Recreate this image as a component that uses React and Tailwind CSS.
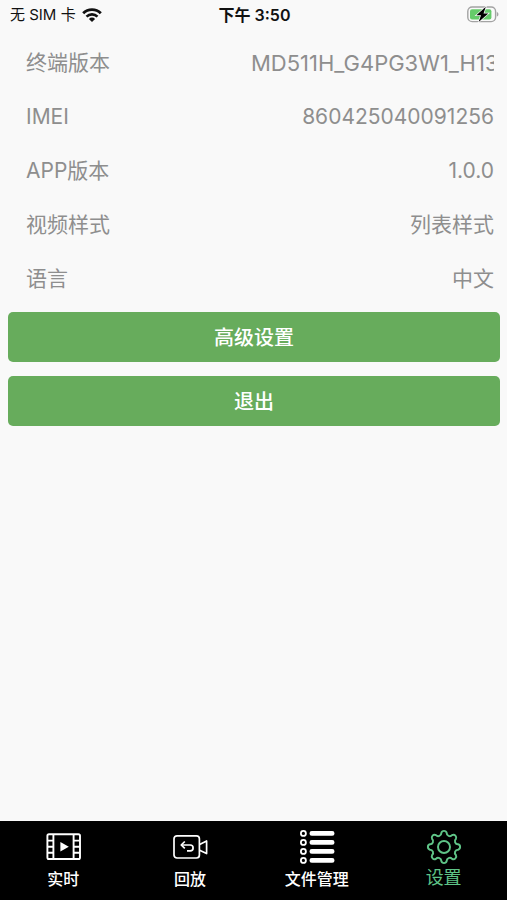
import { useState } from "react";

const infoRows = [
    { label: "终端版本", value: "MD511H_G4PG3W1_H13", long: true },
    { label: "IMEI", value: "860425040091256" },
    { label: "APP版本", value: "1.0.0" },
    { label: "视频样式", value: "列表样式" },
    { label: "语言", value: "中文" },
];

const tabs = [
    { id: "live", label: "实时", Icon: FilmIcon },
    { id: "playback", label: "回放", Icon: CameraIcon },
    { id: "files", label: "文件管理", Icon: ListIcon },
    { id: "settings", label: "设置", Icon: GearIcon },
];

function WifiIcon() {
    return (
        <svg width="20" height="14" viewBox="0 0 20 14" fill="none">
            <path
                d="M1.2 5.2a12.6 12.6 0 0 1 17.6 0"
                stroke="#111"
                strokeWidth="2.9"
            />
            <path
                d="M4.5 8.6a7.8 7.8 0 0 1 11 0"
                stroke="#111"
                strokeWidth="2.6"
            />
            <path d="M10 14 6.9 10.9a4.4 4.4 0 0 1 6.2 0z" fill="#111" />
        </svg>
    );
}

function BatteryIcon() {
    return (
        <svg width="32" height="18" viewBox="0 0 32 18" fill="none">
            <rect
                x="0.8"
                y="1"
                width="27.8"
                height="14.6"
                rx="4.4"
                stroke="#a3a3a3"
                strokeWidth="1.4"
            />
            <path d="M29.8 6c2.2.6 2.2 4 0 4.6z" fill="#a3a3a3" />
            <rect
                x="3"
                y="3.2"
                width="21.4"
                height="10.2"
                rx="2"
                fill="#65cb6a"
            />
            <path
                d="M18.8.8 9.4 9.2h4.6L11.6 16l9.7-8.6h-4.8z"
                fill="#000"
                stroke="#f9f9f9"
                strokeWidth="1.4"
                paintOrder="stroke"
            />
        </svg>
    );
}

function FilmIcon() {
    return (
        <svg width="36" height="36" viewBox="0 0 36 36" fill="none">
            <g stroke="#fff" strokeWidth="1.9">
                <rect x="2.4" y="5.2" width="32.6" height="24.8" rx="1.6" />
                <path d="M8.4 5.2V30M28.6 5.2V30" />
                <path d="M2.4 11.6h6M2.4 17.7h6M2.4 23.8h6M28.6 11.6H35M28.6 17.7H35M28.6 23.8H35" />
            </g>
            <path d="M15.4 13v9.4l8.4-4.7z" fill="#fff" />
        </svg>
    );
}

function CameraIcon() {
    return (
        <svg
            width="36"
            height="36"
            viewBox="0 0 36 36"
            fill="none"
            stroke="#fff"
            strokeWidth="1.7"
            strokeLinejoin="round"
        >
            <rect x="2" y="6.8" width="25.4" height="22.2" rx="3" />
            <path d="m27.6 15.4 7-3.4v12.6l-7-3.4" />
            <path d="M9.8 16h8.4a2.9 2.9 0 0 1 0 5.8H15" />
            <path d="m12.8 12.5-3.6 3.5 3.6 3.4" />
        </svg>
    );
}

function ListIcon() {
    return (
        <svg width="36" height="36" viewBox="0 0 36 36" fill="none">
            <g stroke="#fff" strokeWidth="1.8">
                <circle cx="4.4" cy="4.4" r="2.5" />
                <circle cx="4.4" cy="13.4" r="2.5" />
                <circle cx="4.4" cy="22.4" r="2.5" />
                <circle cx="4.4" cy="31.4" r="2.5" />
            </g>
            <path
                d="M12.8 4.4h20.4M12.8 13.4h20.4M12.8 22.4h20.4M12.8 31.4h20.4"
                stroke="#fff"
                strokeWidth="4.6"
                strokeLinecap="round"
            />
        </svg>
    );
}

function GearIcon() {
    return (
        <svg
            width="36"
            height="36"
            viewBox="-17.4 -17.4 34.8 34.8"
            fill="none"
            stroke="#5fc487"
            strokeWidth="1.9"
            strokeLinejoin="round"
        >
            <path d="M-2.6-13.6A2.7 2.7 0 0 1 2.6-13.6A3 3 0 0 0 7.78-11.46A2.7 2.7 0 0 1 11.46-7.78A3 3 0 0 0 13.6-2.6A2.7 2.7 0 0 1 13.6 2.6A3 3 0 0 0 11.46 7.78A2.7 2.7 0 0 1 7.78 11.46A3 3 0 0 0 2.6 13.6A2.7 2.7 0 0 1-2.6 13.6A3 3 0 0 0-7.78 11.46A2.7 2.7 0 0 1-11.46 7.78A3 3 0 0 0-13.6 2.6A2.7 2.7 0 0 1-13.6-2.6A3 3 0 0 0-11.46-7.78A2.7 2.7 0 0 1-7.78-11.46A3 3 0 0 0-2.6-13.6Z" />
            <circle r="5.8" />
        </svg>
    );
}

function StatusBar() {
    return (
        <header className="grid grid-cols-3 items-center h-[30px] pl-[10px] pr-2 text-[15px] text-[#111]">
            <div className="flex items-center gap-[6px]">
                <span>无 SIM 卡</span>
                <WifiIcon />
            </div>
            <p className="text-center text-[16px] font-semibold">下午 3:50</p>
            <div className="flex justify-end">
                <BatteryIcon />
            </div>
        </header>
    );
}

export default function App() {
    const [activeTab, setActiveTab] = useState("settings");

    return (
        <div className="min-h-screen flex flex-col bg-[#f9f9f9] font-[Inter,'Noto_Sans_CJK_SC',sans-serif]">
            <StatusBar />

            <main className="flex-1 pl-2 pr-[7px] pt-[6px]">
                <dl className="pl-[18px] pr-[6px] text-[21px] text-[#8e8e8e]">
                    {infoRows.map((row) => (
                        <div
                            key={row.label}
                            className="flex items-center justify-between h-[54px]"
                        >
                            <dt>{row.label}</dt>
                            <dd
                                className={`w-[243px] overflow-hidden whitespace-nowrap text-right ${
                                    row.long ? "text-[22px]" : ""
                                }`}
                            >
                                {row.value}
                            </dd>
                        </div>
                    ))}
                </dl>

                <div className="flex flex-col gap-[14px] pt-[6px]">
                    <button
                        type="button"
                        className="h-[50px] pt-[2px] rounded-[5px] bg-[#67ac5c] text-white text-[20px] font-medium"
                    >
                        高级设置
                    </button>
                    <button
                        type="button"
                        className="h-[50px] pt-[2px] rounded-[5px] bg-[#67ac5c] text-white text-[20px] font-medium"
                    >
                        退出
                    </button>
                </div>
            </main>

            <nav className="grid grid-cols-4 h-[79px] bg-black">
                {tabs.map(({ id, label, Icon }) => (
                    <button
                        key={id}
                        type="button"
                        onClick={() => setActiveTab(id)}
                        className={`flex flex-col items-center pt-2 ${
                            activeTab === id
                                ? "text-[18px] leading-[26px] text-[#5fc487]"
                                : "text-[16px] leading-[28px] font-medium text-white"
                        }`}
                    >
                        <Icon />
                        {label}
                    </button>
                ))}
            </nav>
        </div>
    );
}
